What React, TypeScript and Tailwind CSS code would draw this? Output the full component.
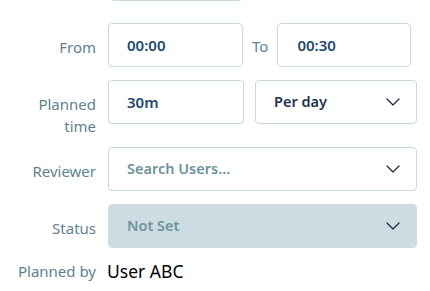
import React from 'react';
import { ChevronDown } from 'lucide-react';

const font = { fontFamily: '"Noto Sans", "Open Sans", sans-serif' };

const Label: React.FC<{ children: React.ReactNode }> = ({ children }) => (
  <div className="w-[96px] shrink-0 pt-[13px] text-right text-[15px] leading-[22px] text-[#5d838e]">
    {children}
  </div>
);

const Select: React.FC<{ text: string; className?: string; textClass?: string }> = ({
  text,
  className = '',
  textClass = 'text-[#1e3350]',
}) => (
  <div
    className={`flex h-[44px] items-center justify-between rounded-[4px] border pl-[18px] pr-[11px] ${className}`}
  >
    <span className={`text-[14.5px] font-semibold ${textClass}`}>{text}</span>
    <ChevronDown size={24} strokeWidth={1.25} className="text-[#1b2b40]" />
  </div>
);

export default function App() {
  return (
    <div className="h-[291px] w-[430px] overflow-hidden bg-white" style={font}>
      <div className="flex flex-col">
        {/* cut-off field above */}
        <div className="-mt-[43px] ml-[110px] h-[44px] w-[133px] rounded-[4px] border border-[#c9d8e1]" />

        {/* From / To */}
        <div className="mt-[22px] flex gap-[12px]">
          <Label>From</Label>
          <div className="flex items-center">
            <div className="flex h-[44px] w-[135px] items-center rounded-[4px] border border-[#c9d8e1] pl-[18px] text-[15px] font-semibold text-[#1f4a6e]">
              00:00
            </div>
            <span className="mx-[9px] pt-[3px] text-[15px] text-[#5d838e]">To</span>
            <div className="flex h-[44px] w-[134px] items-center rounded-[4px] border border-[#c9d8e1] pl-[19px] text-[15px] font-semibold text-[#1f4a6e]">
              00:30
            </div>
          </div>
        </div>

        {/* Planned time */}
        <div className="mt-[13px] -mb-[3px] flex gap-[12px]">
          <Label>
            Planned
            <br />
            time
          </Label>
          <div className="flex items-start gap-[11px]">
            <div className="flex h-[44px] w-[136px] items-center rounded-[4px] border border-[#c9d8e1] pl-[18px] text-[15px] font-semibold text-[#1f4a6e]">
              30m
            </div>
            <Select text="Per day" className="w-[162px] border-[#c9d8e1]" />
          </div>
        </div>

        {/* Reviewer */}
        <div className="mt-[13px] flex gap-[12px]">
          <Label>Reviewer</Label>
          <Select
            text="Search Users..."
            className="w-[309px] border-[#c9d8e1]"
            textClass="text-[#6e929d]"
          />
        </div>

        {/* Status */}
        <div className="mt-[13px] flex gap-[12px]">
          <Label>Status</Label>
          <Select
            text="Not Set"
            className="w-[309px] border-[#cddbe3] bg-[#cddbe3]"
            textClass="text-[#6e949c]"
          />
        </div>

        {/* Planned by */}
        <div className="mt-[12px] flex gap-[11px]">
          <div className="w-[96px] shrink-0 text-right text-[15px] leading-[22px] text-[#5d838e]">
            Planned by
          </div>
          <div className="text-[17.5px] leading-[22px] text-black">User ABC</div>
        </div>
      </div>
    </div>
  );
}
